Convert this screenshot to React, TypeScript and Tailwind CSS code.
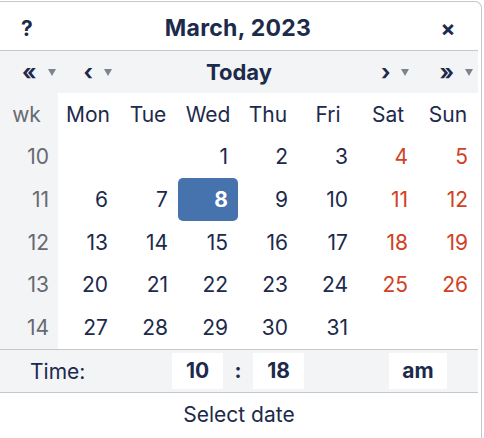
import React from "react";

const ink = "text-[#1c2a4b]";

const weeks: { wk: number; days: (number | null)[] }[] = [
  { wk: 10, days: [null, null, 1, 2, 3, 4, 5] },
  { wk: 11, days: [6, 7, 8, 9, 10, 11, 12] },
  { wk: 12, days: [13, 14, 15, 16, 17, 18, 19] },
  { wk: 13, days: [20, 21, 22, 23, 24, 25, 26] },
  { wk: 14, days: [27, 28, 29, 30, 31, null, null] },
];

const dayNames = ["Mon", "Tue", "Wed", "Thu", "Fri", "Sat", "Sun"];

function Caret() {
  return (
    <svg width="8" height="7" viewBox="0 0 8 7" className="ml-[11px]">
      <path d="M0 0 H8 L4 7 Z" fill="#7e848d" />
    </svg>
  );
}

function NavBtn({ glyph }: { glyph: string }) {
  return (
    <div className="flex items-center">
      <span className={`text-[22px] font-bold leading-none ${ink}`}>{glyph}</span>
      <Caret />
    </div>
  );
}

export default function App() {
  return (
    <div
      className="h-[438px] w-[484px] overflow-hidden bg-white"
      style={{ fontFamily: "Inter, 'Noto Sans', sans-serif" }}
    >
      <div className="mt-px h-[460px] w-[482px] rounded-tr-[7px] border-t border-r border-[#c4c7cd] bg-white">
        <div className="w-[478px]">
          {/* title row */}
          <div className="grid h-[49px] grid-cols-[58px_1fr_60px] items-center border-b border-[#c4c7cd] pt-[5px]">
            <span className={`pr-[4px] text-center text-[21px] font-bold ${ink}`}>?</span>
            <span className={`text-center text-[23px] font-bold tracking-[0.3px] ${ink}`}>
              March, 2023
            </span>
            <span className={`text-center text-[22px] font-bold ${ink}`}>×</span>
          </div>

          {/* navigation row */}
          <div className="grid h-[42px] grid-cols-[1fr_auto_1fr] items-center bg-[#f3f4f6]">
            <div className="flex items-center gap-[28px] pl-[22px]">
              <NavBtn glyph="«" />
              <NavBtn glyph="‹" />
            </div>
            <span className={`text-[22px] font-bold ${ink}`}>Today</span>
            <div className="flex items-center justify-end gap-[30px] pr-[5px]">
              <NavBtn glyph="›" />
              <NavBtn glyph="»" />
            </div>
          </div>

          {/* day grid */}
          <div className="grid grid-cols-[58px_repeat(7,60px)] border-b border-[#c4c7cd] text-[21px]">
            <div className="flex h-[42.67px] items-center justify-center bg-[#f3f4f6] pr-[5px] text-[#666a70]">
              wk
            </div>
            {dayNames.map((d) => (
              <div key={d} className={`flex h-[42.67px] items-center justify-center ${ink}`}>
                {d}
              </div>
            ))}
            {weeks.map((w) => (
              <React.Fragment key={w.wk}>
                <div className="flex h-[42.67px] items-center justify-end bg-[#f3f4f6] pr-[9px] text-[#666a70]">
                  {w.wk}
                </div>
                {w.days.map((d, i) => {
                  const selected = d === 8;
                  const weekend = i >= 5;
                  return (
                    <div
                      key={i}
                      className={`flex h-[42.67px] items-center justify-end pr-[10px] ${
                        selected
                          ? "rounded-[5px] bg-[#4672ad] font-bold text-white"
                          : weekend
                          ? "text-[#d14124]"
                          : ink
                      }`}
                    >
                      {d ?? ""}
                    </div>
                  );
                })}
              </React.Fragment>
            ))}
          </div>

          {/* time row */}
          <div className={`flex h-[43px] items-center border-b border-[#c4c7cd] bg-[#f3f4f6] text-[21px] ${ink}`}>
            <span className="w-[172px] pl-[30px] pt-[2px]">Time:</span>
            <span className="flex h-[36px] w-[51px] items-center justify-center bg-white font-bold">10</span>
            <span className="w-[30px] text-center font-bold">:</span>
            <span className="flex h-[36px] w-[51px] items-center justify-center bg-white font-bold">18</span>
            <span className="w-[85px]" />
            <span className="flex h-[36px] w-[58px] items-center justify-center bg-white font-bold">am</span>
          </div>

          {/* footer */}
          <div className={`flex h-[44px] items-center justify-center text-[21px] ${ink}`}>
            Select date
          </div>
        </div>
      </div>
    </div>
  );
}
